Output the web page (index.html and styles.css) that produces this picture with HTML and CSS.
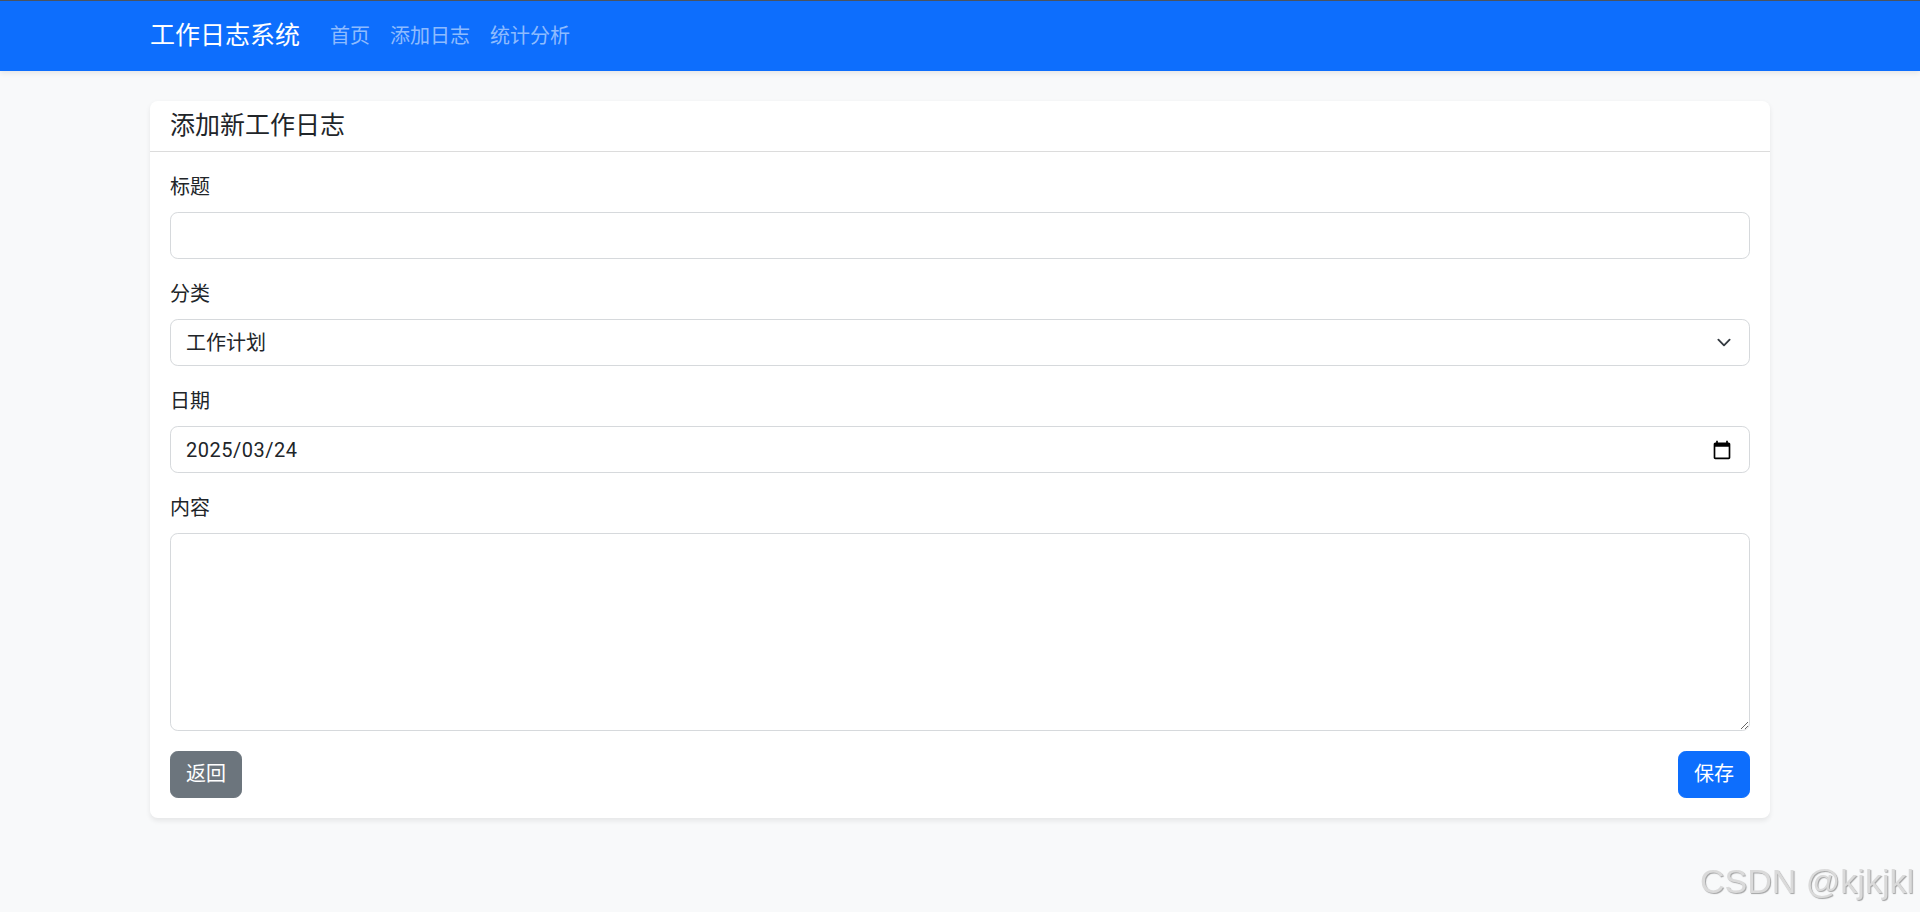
FILE: index.html
```html
<!DOCTYPE html>
<html lang="zh-CN">
<head>
    <title>工作日志系统</title>
    <meta http-equiv="Content-Type" content="text/html; charset=utf-8"/>
    <link rel="stylesheet" href="styles.css">
</head>
<body>
    <nav class="navbar">
        <div class="container navbar-inner">
            <a class="navbar-brand" href="#">工作日志系统</a>
            <ul class="nav-links">
                <li><a class="nav-link" href="#">首页</a></li>
                <li><a class="nav-link" href="#">添加日志</a></li>
                <li><a class="nav-link" href="#">统计分析</a></li>
            </ul>
        </div>
    </nav>
    <div class="container main-panel">
        <div class="card">
            <div class="card-header">
                <h5 class="card-title">添加新工作日志</h5>
            </div>
            <form class="card-body">
                <div class="form-group">
                    <label class="form-label" for="title">标题</label>
                    <input class="form-control" type="text" id="title">
                </div>
                <div class="form-group">
                    <label class="form-label" for="category">分类</label>
                    <select class="form-control form-select" id="category">
                        <option>工作计划</option>
                        <option>工作总结</option>
                        <option>会议记录</option>
                    </select>
                </div>
                <div class="form-group">
                    <label class="form-label" for="date">日期</label>
                    <div class="form-control date-control">
                        <input class="date-input" type="text" id="date" value="2025/03/24">
                        <svg class="date-icon" viewBox="0 0 24 24" width="20" height="20">
                            <path d="M20 3h-1V1h-2v2H7V1H5v2H4c-1.1 0-2 .9-2 2v16c0 1.1.9 2 2 2h16c1.1 0 2-.9 2-2V5c0-1.1-.9-2-2-2zm0 18H4V8h16v13z" fill="#000"/>
                        </svg>
                    </div>
                </div>
                <div class="form-group">
                    <label class="form-label" for="content">内容</label>
                    <textarea class="form-control" id="content" rows="6"></textarea>
                </div>
                <div class="form-actions">
                    <a class="btn btn-secondary" href="#">返回</a>
                    <button class="btn btn-primary" type="submit">保存</button>
                </div>
            </form>
        </div>
    </div>
    <div class="watermark">CSDN @kjkjkl</div>
</body>
</html>
```

FILE: styles.css
```css
* {
    box-sizing: border-box;
}

html {
    height: 100%;
}

body {
    height: 100%;
    margin: 0;
    padding: 0;
    overflow: hidden;
    background: #f8f9fa;
    font-family: "Segoe UI", Roboto, "Noto Sans CJK SC", sans-serif;
    font-size: 20px;
    line-height: 1.5;
    color: #212529;
}

a {
    text-decoration: none;
}

.container {
    width: 1650px;
    margin: 0 auto;
    padding: 0 15px;
}

.navbar {
    background: #0d6efd;
    height: 71px;
    border-top: 1px solid #4a5360;
    box-shadow: 0 2.5px 5px rgba(0, 0, 0, 0.075);
    position: relative;
    z-index: 1;
}

.navbar-inner {
    height: 100%;
    display: flex;
    align-items: center;
}

.navbar-brand {
    font-size: 25px;
    line-height: 37.5px;
    color: #fff;
    margin-right: 20px;
}

.nav-links {
    display: flex;
    list-style: none;
    margin: 0;
    padding: 0;
}

.nav-link {
    display: block;
    padding: 10px 10px;
    color: rgba(255, 255, 255, 0.55);
    line-height: 30px;
}

.main-panel {
    margin-top: 30px;
}

.card {
    background: #fff;
    border-radius: 7.8px;
    box-shadow: 0 2.5px 5px rgba(0, 0, 0, 0.075);
}

.card-header {
    padding: 10px 20px;
    border-bottom: 1.25px solid #dcdcdc;
}

.card-title {
    margin: 0;
    font-size: 25px;
    font-weight: 400;
    line-height: 30px;
}

.card-body {
    padding: 20px;
}

.form-group {
    margin-bottom: 20px;
}

.form-label {
    display: block;
    margin-bottom: 10px;
}

.form-control {
    display: block;
    width: 100%;
    padding: 7.5px 15px;
    font: inherit;
    color: #212529;
    background: #fff;
    border: 1.25px solid #d6d9dc;
    border-radius: 7.8px;
    line-height: 30px;
    outline: none;
}

textarea.form-control {
    height: 197.5px;
    resize: vertical;
}

.form-select {
    appearance: none;
    -webkit-appearance: none;
    padding-right: 55px;
    background-image: url("data:image/svg+xml,%3csvg xmlns='http://www.w3.org/2000/svg' viewBox='0 0 16 16'%3e%3cpath fill='none' stroke='%23343a40' stroke-linecap='round' stroke-linejoin='round' stroke-width='2' d='m2 5 6 6 6-6'/%3e%3c/svg%3e");
    background-repeat: no-repeat;
    background-position: right 15px center;
    background-size: 20px 15px;
}

.date-control {
    display: flex;
    align-items: center;
    padding-right: 17px;
}

.date-input {
    flex: 1;
    border: none;
    padding: 0;
    font: inherit;
    letter-spacing: 0.5px;
    color: #212529;
    background: transparent;
    outline: none;
    line-height: 30px;
}

.date-icon {
    display: block;
}

.form-actions {
    display: flex;
    justify-content: space-between;
}

.btn {
    display: inline-block;
    padding: 7.5px 15px;
    font: inherit;
    line-height: 30px;
    color: #fff;
    border: 1.25px solid transparent;
    border-radius: 7.8px;
    cursor: pointer;
}

.btn-secondary {
    background: #6c757d;
    border-color: #6c757d;
}

.btn-primary {
    background: #0d6efd;
    border-color: #0d6efd;
}

.watermark {
    position: fixed;
    right: 6px;
    bottom: 14px;
    font-family: "Liberation Sans", Arial, sans-serif;
    font-size: 34px;
    line-height: 1;
    color: #dadada;
    text-shadow: 1px 1px 1px rgba(0, 0, 0, 0.35);
}
```
